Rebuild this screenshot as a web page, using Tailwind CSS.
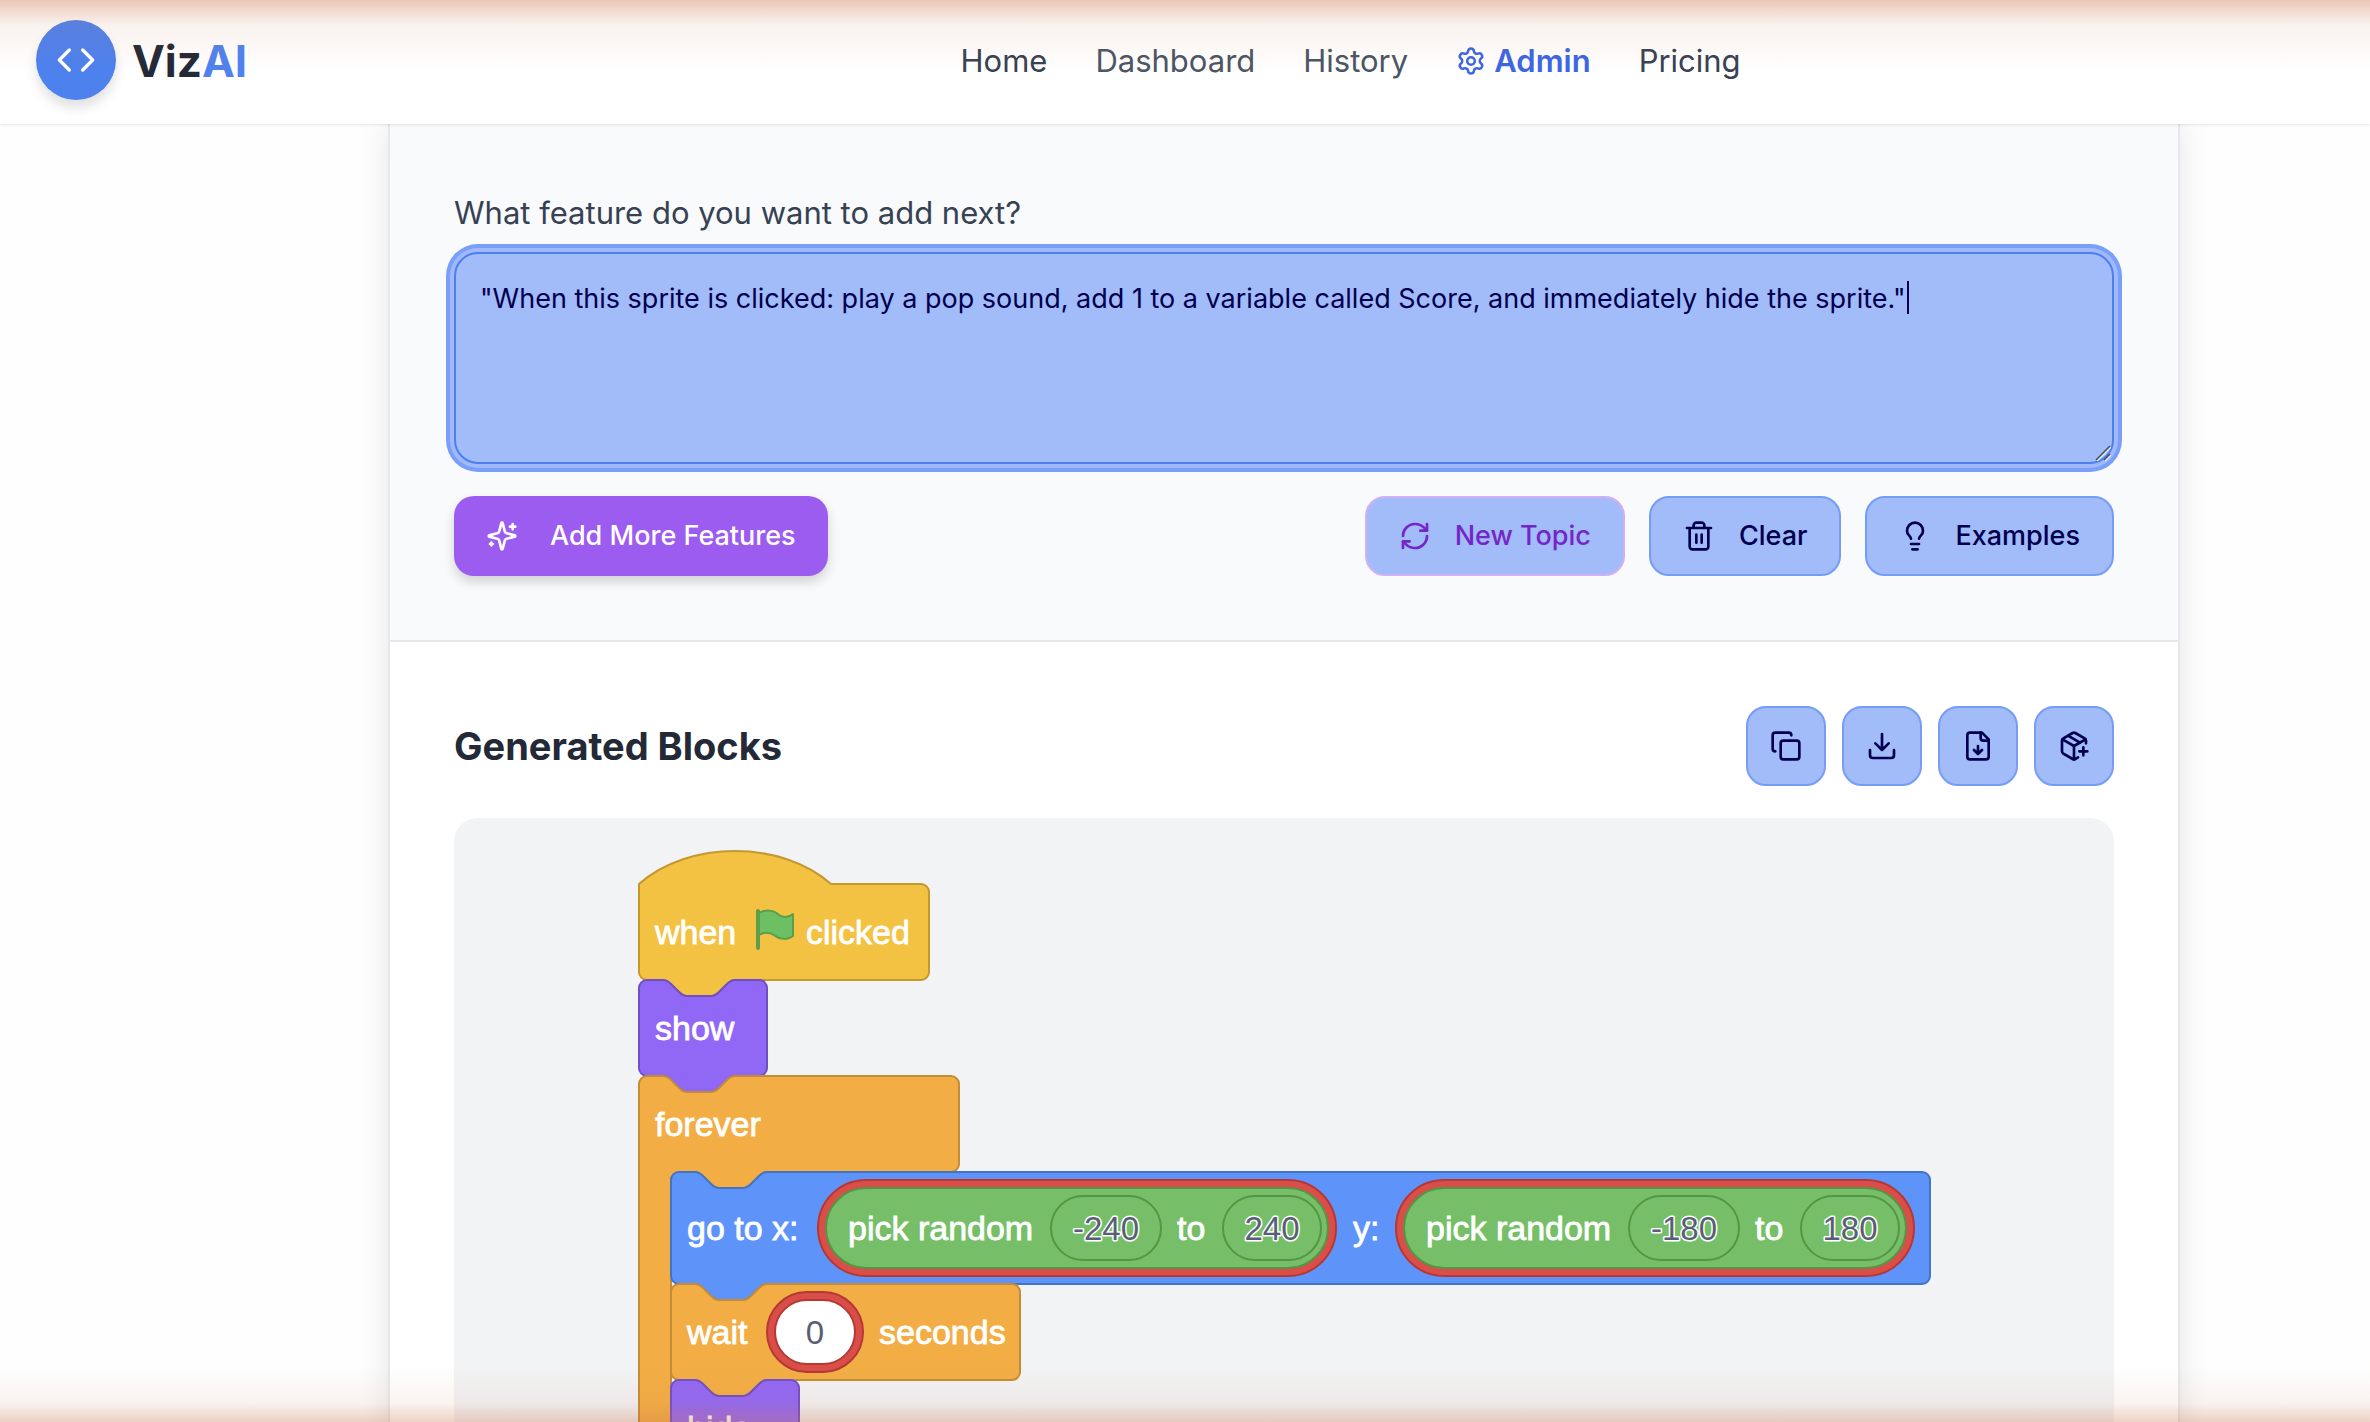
<!DOCTYPE html>
<html lang="en">
<head>
    <meta charset="UTF-8">
    <meta name="viewport" content="width=device-width, initial-scale=1.0">
    <title>VizAI</title>
    <script src="https://cdn.jsdelivr.net/npm/@tailwindcss/browser@4"></script>
</head>
<body class="relative flex h-screen flex-col overflow-hidden bg-[#fefefe] font-['Inter',sans-serif] text-gray-800">
    <!-- Header -->
    <header class="relative z-10 flex h-[124px] shrink-0 items-center gap-[84px] bg-white pb-1 pl-9 shadow-[0_1px_3px_rgba(0,0,0,0.10)]">
        <a href="#" class="flex items-center gap-4">
            <span class="flex size-20 items-center justify-center rounded-full bg-[#4d81ee] shadow-[0_8px_12px_rgba(0,0,0,0.12)]">
                <svg class="size-10" viewBox="0 0 24 24" fill="none" stroke="white" stroke-width="2" stroke-linecap="round" stroke-linejoin="round"><path d="m16 18 6-6-6-6M8 6l-6 6 6 6"/></svg>
            </span>
            <span class="pt-0.5 text-[44px] font-bold leading-none text-[#232936]">Viz<span class="text-[#4f82ee]">AI</span></span>
        </a>
        <nav class="flex flex-1 items-center justify-center gap-12 pt-0.5 text-[31px] text-gray-700">
            <a href="#">Home</a>
            <a href="#" class="text-gray-600">Dashboard</a>
            <a href="#" class="text-gray-600">History</a>
            <a href="#" class="flex items-center gap-2 font-semibold text-[#3b66e4]">
                <svg class="size-[30px]" viewBox="0 0 24 24" fill="none" stroke="currentColor" stroke-width="2" stroke-linecap="round" stroke-linejoin="round"><path d="M9.671 4.136a2.34 2.34 0 0 1 4.659 0 2.34 2.34 0 0 0 3.319 1.915 2.34 2.34 0 0 1 2.33 4.033 2.34 2.34 0 0 0 0 3.831 2.34 2.34 0 0 1-2.33 4.033 2.34 2.34 0 0 0-3.319 1.915 2.34 2.34 0 0 1-4.659 0 2.34 2.34 0 0 0-3.32-1.915 2.34 2.34 0 0 1-2.33-4.033 2.34 2.34 0 0 0 0-3.831A2.34 2.34 0 0 1 6.35 6.051a2.34 2.34 0 0 0 3.319-1.915"/><circle cx="12" cy="12" r="3"/></svg>
                Admin
            </a>
            <a href="#">Pricing</a>
        </nav>
    </header>

    <main class="min-h-0 flex-1 pl-[388px] pr-[190px]">
        <div class="border-x-2 border-[#e5e7eb] bg-white shadow-[0_0_30px_rgba(0,0,0,0.10)]">
            <!-- Prompt -->
            <section class="border-b-2 border-[#e5e7eb] bg-[#f9fafc] p-16">
                <label for="feature" class="block text-[31px] leading-[50px] text-gray-700">What feature do you want to add next?</label>
                <div class="relative mt-[14px]">
                    <textarea id="feature" class="block h-[212px] w-full resize-none rounded-3xl border-2 border-[#4b80ee] bg-[#a2bbf9] px-6 py-6 text-[27px] leading-[42px] text-[#00004f] shadow-[0_0_0_4px_#a0b9f8,0_0_0_8px_#7a9ffb] outline-none">"When this sprite is clicked: play a pop sound, add 1 to a variable called Score, and immediately hide the sprite."</textarea>
                    <span class="absolute left-[1453px] top-[29px] h-[33px] w-0.5 bg-[#00004f]"></span>
                    <svg class="absolute bottom-[3px] right-[3px] size-4" viewBox="0 0 16 16" fill="none" stroke-width="1.5"><path stroke="#e6edfd" d="M2 16 16 2M10 16l6-6"/><path stroke="#45505f" d="M1 15 15 1M9 15l6-6"/></svg>
                </div>
                <div class="mt-8 flex flex-wrap items-center justify-between gap-6 text-[27px] font-medium">
                    <button class="flex h-20 items-center gap-8 rounded-[20px] bg-[#9c5cf0] px-8 text-white shadow-[0_6px_12px_rgba(0,0,0,0.16)]">
                        <svg class="size-8" viewBox="0 0 24 24" fill="none" stroke="currentColor" stroke-width="2" stroke-linecap="round" stroke-linejoin="round"><path d="M9.937 15.5A2 2 0 0 0 8.5 14.063l-6.135-1.582a.5.5 0 0 1 0-.962L8.5 9.936A2 2 0 0 0 9.937 8.5l1.582-6.135a.5.5 0 0 1 .963 0L14.063 8.5A2 2 0 0 0 15.5 9.937l6.135 1.581a.5.5 0 0 1 0 .964L15.5 14.063a2 2 0 0 0-1.437 1.437l-1.582 6.135a.5.5 0 0 1-.963 0zM20 3v4M22 5h-4M4 17v2M5 18H3"/></svg>
                        Add More Features
                    </button>
                    <div class="flex gap-6 text-[#00004f]">
                        <button class="flex h-20 items-center gap-6 rounded-[20px] border-2 border-[#d2b0f6] bg-[#a2bbf9] px-8 text-[#7426c8]">
                            <svg class="size-8" viewBox="0 0 24 24" fill="none" stroke="currentColor" stroke-width="2" stroke-linecap="round" stroke-linejoin="round"><path d="M3 12a9 9 0 0 1 9-9 9.75 9.75 0 0 1 6.74 2.74L21 8"/><path d="M21 3v5h-5M21 12a9 9 0 0 1-9 9 9.75 9.75 0 0 1-6.74-2.74L3 16"/><path d="M8 16H3v5"/></svg>
                            New Topic
                        </button>
                        <button class="flex h-20 items-center gap-6 rounded-[20px] border-2 border-[#759cf7] bg-[#a2bbf9] px-8">
                            <svg class="size-8" viewBox="0 0 24 24" fill="none" stroke="currentColor" stroke-width="2" stroke-linecap="round" stroke-linejoin="round"><path d="M3 6h18M19 6v14c0 1-1 2-2 2H7c-1 0-2-1-2-2V6M8 6V4c0-1 1-2 2-2h4c1 0 2 1 2 2v2M10 11v6M14 11v6"/></svg>
                            Clear
                        </button>
                        <button class="flex h-20 items-center gap-6 rounded-[20px] border-2 border-[#759cf7] bg-[#a2bbf9] px-8">
                            <svg class="size-8" viewBox="0 0 24 24" fill="none" stroke="currentColor" stroke-width="2" stroke-linecap="round" stroke-linejoin="round"><path d="M15 14c.2-1 .7-1.700 1.500-2.500 1-.9 1.500-2.200 1.500-3.500A6 6 0 0 0 6 8c0 1 .2 2.200 1.500 3.500.7.700 1.300 1.500 1.500 2.500M9 18h6M10 22h4"/></svg>
                            Examples
                        </button>
                    </div>
                </div>
            </section>

            <!-- Result -->
            <section class="p-16">
                <div class="mb-8 flex items-center justify-between">
                    <h2 class="text-[38px] font-bold text-[#232936]">Generated Blocks</h2>
                    <div class="flex gap-4 text-[#00004f]">
                        <button aria-label="Copy" class="flex size-20 items-center justify-center rounded-[20px] border-2 border-[#759cf7] bg-[#a2bbf9]">
                            <svg class="size-8" viewBox="0 0 24 24" fill="none" stroke="currentColor" stroke-width="2" stroke-linecap="round" stroke-linejoin="round"><rect width="14" height="14" x="8" y="8" rx="2"/><path d="M4 16c-1.100 0-2-.9-2-2V4c0-1.100.9-2 2-2h10c1.100 0 2 .9 2 2"/></svg>
                        </button>
                        <button aria-label="Download" class="flex size-20 items-center justify-center rounded-[20px] border-2 border-[#759cf7] bg-[#a2bbf9]">
                            <svg class="size-8" viewBox="0 0 24 24" fill="none" stroke="currentColor" stroke-width="2" stroke-linecap="round" stroke-linejoin="round"><path d="M21 15v4a2 2 0 0 1-2 2H5a2 2 0 0 1-2-2v-4M7 10l5 5 5-5M12 15V3"/></svg>
                        </button>
                        <button aria-label="Download file" class="flex size-20 items-center justify-center rounded-[20px] border-2 border-[#759cf7] bg-[#a2bbf9]">
                            <svg class="size-8" viewBox="0 0 24 24" fill="none" stroke="currentColor" stroke-width="2" stroke-linecap="round" stroke-linejoin="round"><path d="M15 2H6a2 2 0 0 0-2 2v16a2 2 0 0 0 2 2h12a2 2 0 0 0 2-2V7Z"/><path d="M14 2v4a2 2 0 0 0 2 2h4M12 18v-6M9 15l3 3 3-3"/></svg>
                        </button>
                        <button aria-label="Add package" class="flex size-20 items-center justify-center rounded-[20px] border-2 border-[#759cf7] bg-[#a2bbf9]">
                            <svg class="size-8" viewBox="0 0 24 24" fill="none" stroke="currentColor" stroke-width="2" stroke-linecap="round" stroke-linejoin="round"><path d="M16 16h6M19 13v6M21 10V8a2 2 0 0 0-1-1.730l-7-4a2 2 0 0 0-2 0l-7 4A2 2 0 0 0 3 8v8a2 2 0 0 0 1 1.730l7 4a2 2 0 0 0 2 0l2-1.140M7.500 4.270l9 5.150"/><path d="M3.290 7 12 12l8.710-5M12 22V12"/></svg>
                        </button>
                    </div>
                </div>

                <div class="flex justify-center rounded-3xl bg-[#f2f3f5] py-8">
                    <svg class="h-[692px] w-[1292px] overflow-visible font-['Liberation_Sans',Arial,sans-serif]" viewBox="0 0 1292 692" stroke-width="2">
                        <!-- when flag clicked -->
                        <path fill="#f4c242" stroke="#c4982f" d="M1 34c50-44 142-44 192 0H283a8 8 0 0 1 8 8V122a8 8 0 0 1-8 8H97c-4 0-6 2-8 4l-8 8c-2 2-4 4-8 4H49c-4 0-6-2-8-4l-8-8c-2-2-4-4-8-4H9a8 8 0 0 1-8-8Z"/>
                        <path fill="#6cbf63" stroke="#5c9e4a" stroke-linejoin="round" d="M121 63c7-4 15-3 20 2 5 3 9 3 14-1v22c-5 4-13 4-19-1-5-3-10-3-15 0Z"/>
                        <path stroke="#5c9e4a" stroke-width="4" stroke-linecap="round" d="M120 61v37"/>
                        <!-- show -->
                        <path fill="#9168f6" stroke="#6f4fc4" d="M1 138a8 8 0 0 1 8-8H25c4 0 6 2 8 4l8 8c2 2 4 4 8 4H73c4 0 6-2 8-4l8-8c2-2 4-4 8-4H121a8 8 0 0 1 8 8V218a8 8 0 0 1-8 8H97c-4 0-6 2-8 4l-8 8c-2 2-4 4-8 4H49c-4 0-6-2-8-4l-8-8c-2-2-4-4-8-4H9a8 8 0 0 1-8-8Z"/>
                        <!-- forever -->
                        <path fill="#f2ae45" stroke="#c48c37" d="M1 234a8 8 0 0 1 8-8H25c4 0 6 2 8 4l8 8c2 2 4 4 8 4H73c4 0 6-2 8-4l8-8c2-2 4-4 8-4H313a8 8 0 0 1 8 8V314a8 8 0 0 1-8 8H129c-4 0-6 2-8 4l-8 8c-2 2-4 4-8 4H81c-4 0-6-2-8-4l-8-8c-2-2-4-4-8-4H41a8 8 0 0 0-8 8V618a8 8 0 0 0 8 8H313a8 8 0 0 1 8 8V682a8 8 0 0 1-8 8H9a8 8 0 0 1-8-8Z"/>
                        <!-- go to x y -->
                        <path fill="#5e94f9" stroke="#4474c4" d="M33 330a8 8 0 0 1 8-8H57c4 0 6 2 8 4l8 8c2 2 4 4 8 4H105c4 0 6-2 8-4l8-8c2-2 4-4 8-4H1284a8 8 0 0 1 8 8V426a8 8 0 0 1-8 8H129c-4 0-6 2-8 4l-8 8c-2 2-4 4-8 4H81c-4 0-6-2-8-4l-8-8c-2-2-4-4-8-4H41a8 8 0 0 1-8-8Z"/>
                        <g fill="#da4e4a" stroke="#b53833">
                            <rect x="180" y="330" width="518" height="96" rx="48"/>
                            <rect x="758" y="330" width="518" height="96" rx="48"/>
                        </g>
                        <g fill="#76bf68" stroke="#549546">
                            <rect x="188" y="338" width="502" height="80" rx="40"/>
                            <rect x="413" y="346" width="110" height="64" rx="32"/>
                            <rect x="585" y="346" width="98" height="64" rx="32"/>
                            <rect x="766" y="338" width="502" height="80" rx="40"/>
                            <rect x="991" y="346" width="110" height="64" rx="32"/>
                            <rect x="1163" y="346" width="98" height="64" rx="32"/>
                        </g>
                        <!-- wait -->
                        <path fill="#f2ae45" stroke="#c48c37" d="M33 442a8 8 0 0 1 8-8H57c4 0 6 2 8 4l8 8c2 2 4 4 8 4H105c4 0 6-2 8-4l8-8c2-2 4-4 8-4H374a8 8 0 0 1 8 8V522a8 8 0 0 1-8 8H129c-4 0-6 2-8 4l-8 8c-2 2-4 4-8 4H81c-4 0-6-2-8-4l-8-8c-2-2-4-4-8-4H41a8 8 0 0 1-8-8Z"/>
                        <rect x="129" y="442" width="96" height="80" rx="40" fill="#da4e4a" stroke="#b53833"/>
                        <rect x="137" y="450" width="80" height="64" rx="32" fill="white" stroke="#b53833"/>
                        <!-- hide -->
                        <path fill="#9168f6" stroke="#6f4fc4" d="M33 538a8 8 0 0 1 8-8H57c4 0 6 2 8 4l8 8c2 2 4 4 8 4H105c4 0 6-2 8-4l8-8c2-2 4-4 8-4H153a8 8 0 0 1 8 8V618a8 8 0 0 1-8 8H129c-4 0-6 2-8 4l-8 8c-2 2-4 4-8 4H81c-4 0-6-2-8-4l-8-8c-2-2-4-4-8-4H41a8 8 0 0 1-8-8Z"/>

                        <g class="text-[34px]" fill="white" stroke="white" stroke-width="0.8">
                            <text x="17" y="94">when</text>
                            <text x="168" y="94">clicked</text>
                            <text x="17" y="190">show</text>
                            <text x="17" y="286">forever</text>
                            <text x="49" y="390">go to x:</text>
                            <text x="210" y="390">pick random</text>
                            <text x="539" y="390">to</text>
                            <text x="715" y="390">y:</text>
                            <text x="788" y="390">pick random</text>
                            <text x="1117" y="390">to</text>
                            <text x="49" y="494">wait</text>
                            <text x="241" y="494">seconds</text>
                            <text x="49" y="590">hide</text>
                        </g>
                        <g class="text-[33px]" fill="#575e75" stroke="white" stroke-width="3" stroke-linejoin="round" paint-order="stroke" text-anchor="middle">
                            <text x="468" y="390">-240</text>
                            <text x="634" y="390">240</text>
                            <text x="1046" y="390">-180</text>
                            <text x="1212" y="390">180</text>
                            <text x="177" y="494">0</text>
                        </g>
                    </svg>
                </div>
            </section>
        </div>
    </main>

    <!-- Warm glow on the window edges -->
    <div class="pointer-events-none absolute inset-x-0 top-0 z-20 h-[72px] bg-linear-to-b from-[rgba(202,115,77,0.4)] via-[rgba(202,115,77,0.09)] via-35% to-transparent"></div>
    <div class="pointer-events-none absolute inset-x-0 bottom-0 z-20 h-[56px] bg-linear-to-t from-[rgba(202,115,77,0.32)] via-[rgba(202,115,77,0.08)] via-35% to-transparent"></div>
</body>
</html>
